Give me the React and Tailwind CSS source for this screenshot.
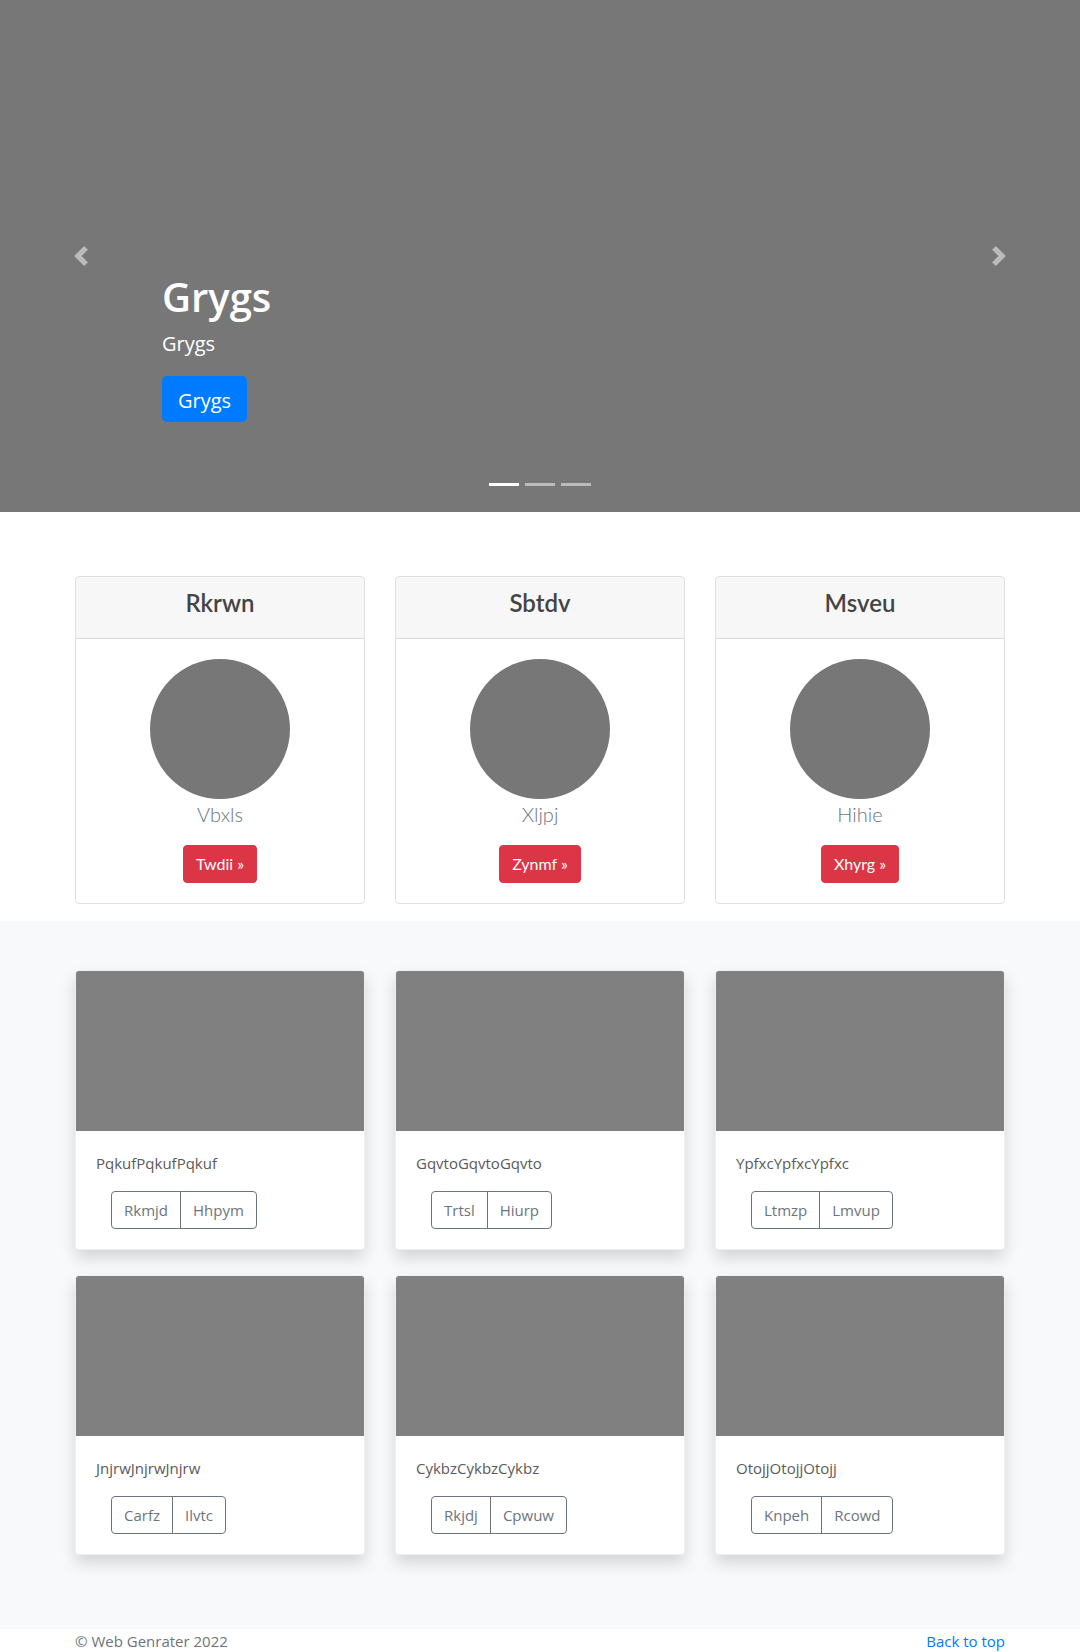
import React from "react";

const body = { fontFamily: '"Open Sans", "Noto Sans", Arial, sans-serif' };
const lato = { fontFamily: 'Lato, "Open Sans", Arial, sans-serif' };

function Prev() {
  return (
    <svg width="20" height="20" viewBox="0 0 8 8" fill="#fff">
      <path d="M5.25 0l-4 4 4 4 1.5-1.5L4.25 4l2.5-2.5L5.25 0z" />
    </svg>
  );
}
function Next() {
  return (
    <svg width="20" height="20" viewBox="0 0 8 8" fill="#fff">
      <path d="M2.75 0l-1.5 1.5L3.75 4l-2.5 2.5L2.75 8l4-4-4-4z" />
    </svg>
  );
}

const pricing = [
  { h: "Rkrwn", t: "Vbxls", b: "Twdii" },
  { h: "Sbtdv", t: "Xljpj", b: "Zynmf" },
  { h: "Msveu", t: "Hihie", b: "Xhyrg" },
];

const album = [
  { t: "PqkufPqkufPqkuf", a: "Rkmjd", b: "Hhpym" },
  { t: "GqvtoGqvtoGqvto", a: "Trtsl", b: "Hiurp" },
  { t: "YpfxcYpfxcYpfxc", a: "Ltmzp", b: "Lmvup" },
  { t: "JnjrwJnjrwJnjrw", a: "Carfz", b: "Ilvtc" },
  { t: "CykbzCykbzCykbz", a: "Rkjdj", b: "Cpwuw" },
  { t: "OtojjOtojjOtojj", a: "Knpeh", b: "Rcowd" },
];

export default function App() {
  return (
    <div style={body} className="w-[1080px] text-[#212529]">
      {/* Hero carousel */}
      <section className="relative h-[512px] bg-[#777] flex flex-col pl-[162px] pt-[273px]">
        <h1 className="text-[40px] leading-[48px] font-semibold text-white mb-2">Grygs</h1>
        <p className="text-[20px] leading-[30px] text-white mb-[17px]">Grygs</p>
        <div>
          <a className="inline-block bg-[#007bff] text-white text-[20px] leading-[30px] px-4 pt-[10px] pb-[6px] rounded-[5px]">
            Grygs
          </a>
        </div>
        <div className="absolute left-0 top-0 h-full w-[162px] flex items-center justify-center opacity-50">
          <Prev />
        </div>
        <div className="absolute right-0 top-0 h-full w-[162px] flex items-center justify-center opacity-50">
          <Next />
        </div>
        <div className="absolute left-0 right-0 bottom-[26px] flex justify-center gap-[6px]">
          <span className="block w-[30px] h-[3px] bg-white" />
          <span className="block w-[30px] h-[3px] bg-white/50" />
          <span className="block w-[30px] h-[3px] bg-white/50" />
        </div>
      </section>

      {/* Pricing cards */}
      <section className="bg-white pt-16 pb-[17px]">
        <div className="mx-auto w-[930px] grid grid-cols-3 gap-[30px]" style={lato}>
          {pricing.map((p) => (
            <div key={p.h} className="border border-black/[.125] rounded-[4px] overflow-hidden">
              <div className="bg-black/[.03] border-b border-black/[.125] pt-3 pb-5 text-center">
                <h4 className="text-[24px] leading-[28.8px] font-semibold text-[#444]">{p.h}</h4>
              </div>
              <div className="p-5 flex flex-col items-center">
                <div className="w-[140px] h-[140px] rounded-full bg-[#777]" />
                <p className="text-[20px] leading-[30px] font-light text-[#6c757d] mb-4">{p.t}</p>
                <a className="inline-block bg-[#dc3545] border border-[#dc3545] text-white text-[16px] leading-6 px-3 py-1.5 rounded-[4px]">
                  {p.b} &raquo;
                </a>
              </div>
            </div>
          ))}
        </div>
      </section>

      {/* Album */}
      <section className="bg-[#f8f9fa] pt-[49px] pb-[74px]">
        <div className="mx-auto w-[930px] grid grid-cols-3 gap-x-[30px] gap-y-[25px]">
          {album.map((c) => (
            <div
              key={c.t}
              className="bg-white border border-black/[.06] rounded-[4px] overflow-hidden shadow-[0_8px_16px_rgba(0,0,0,0.15)]"
            >
              <div className="h-[160px] bg-[#808080]" />
              <div className="p-5">
                <p className="text-[15px] leading-6 text-[#5a5a5a] mb-4">{c.t}</p>
                <div className="pl-[15px] flex">
                  <button className="border border-[#6c757d] text-[#6c757d] text-[15px] leading-6 px-3 py-1.5 rounded-l-[4px]">
                    {c.a}
                  </button>
                  <button className="-ml-px border border-[#6c757d] text-[#6c757d] text-[15px] leading-6 px-3 py-1.5 rounded-r-[4px]">
                    {c.b}
                  </button>
                </div>
              </div>
            </div>
          ))}
        </div>
      </section>

      {/* Footer */}
      <footer className="bg-white">
        <div className="mx-auto w-[930px] flex justify-between text-[15px] leading-6">
          <p className="text-[#6c757d]">© Web Genrater 2022</p>
          <a className="text-[#007bff]">Back to top</a>
        </div>
      </footer>
    </div>
  );
}
